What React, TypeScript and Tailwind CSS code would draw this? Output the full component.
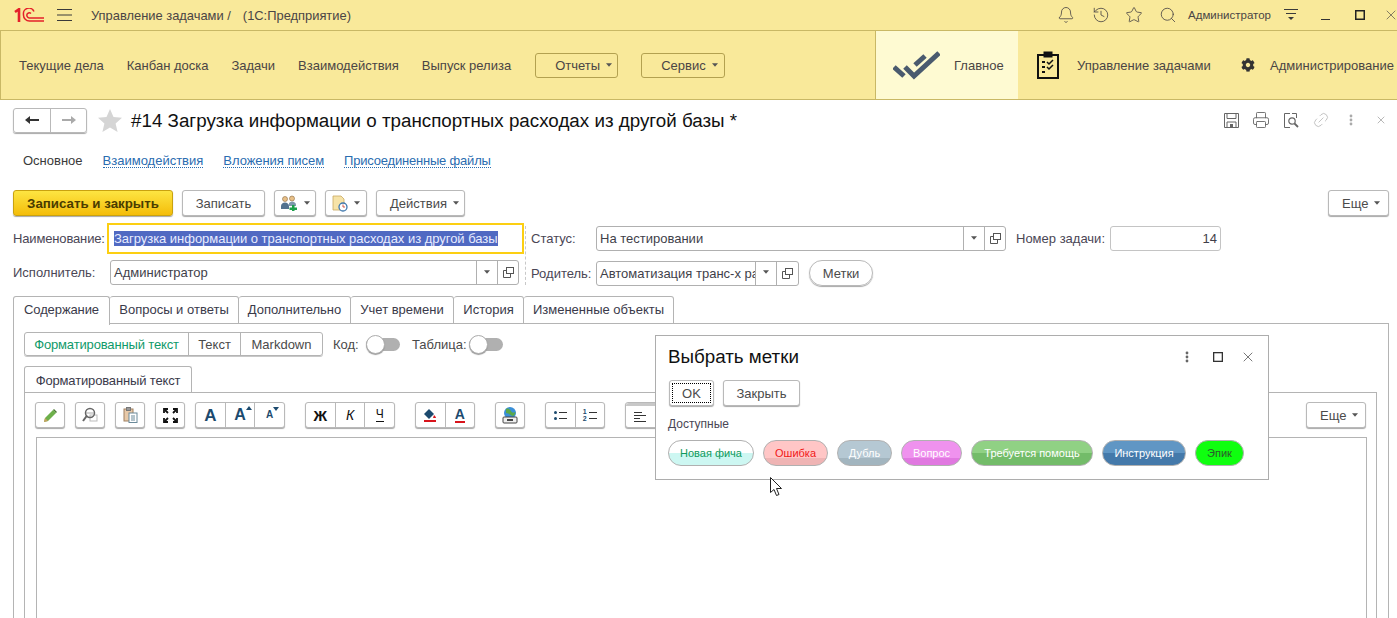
import type { ReactNode } from "react";
import { Bell, History, Star, Search, Printer, Link2, X } from "lucide-react";
import { FaCog } from "react-icons/fa";

function Caret({ className = "" }: { className?: string }) {
  return (
    <svg width="6" height="4" viewBox="0 0 7 4" className={`shrink-0 ${className}`}>
      <path d="M0 0h7L3.5 4z" fill="#555" />
    </svg>
  );
}

function Dots({ color = "#666" }: { color?: string }) {
  return (
    <svg width="4" height="12" viewBox="0 0 4 12">
      <circle cx="2" cy="2" r="1.4" fill={color} />
      <circle cx="2" cy="6" r="1.4" fill={color} />
      <circle cx="2" cy="10" r="1.4" fill={color} />
    </svg>
  );
}

function SquareIcon({ size = 10, stroke = "#333", weight = 1 }: { size?: number; stroke?: string; weight?: number }) {
  return (
    <svg width={size} height={size} viewBox={`0 0 ${size} ${size}`} fill="none" stroke={stroke} strokeWidth={weight}>
      <rect x={weight / 2} y={weight / 2} width={size - weight} height={size - weight} />
    </svg>
  );
}

function Logo1C() {
  return (
    <svg width="30" height="14" viewBox="0 0 30 14" fill="none" stroke="#e4202a" strokeWidth="1.5">
      <path d="M1 4 5 1.200V14" strokeWidth="2.6" />
      <path d="M20 3.500A5.500 5.500 0 0 0 9.500 6.500 6 6 0 0 0 16 13H30" />
      <path d="M17 5.500A2.500 2.500 0 0 0 12.800 7 3 3 0 0 0 16 10H30" />
    </svg>
  );
}

function OpenIcon() {
  return (
    <svg width="11" height="11" viewBox="0 0 11 11" fill="none" stroke="#555">
      <rect x="3.5" y="0.5" width="7" height="6" />
      <path d="M3.5 3.5H.5v7h7V6.5" />
    </svg>
  );
}

function Btn({ children, className = "" }: { children: ReactNode; className?: string }) {
  return (
    <div className={`flex h-[26px] items-center gap-[6px] rounded-[3px] border border-[#b9b9b9] bg-white text-[#4b4b4b] shadow-[0_1px_1px_#a8a8a8] ${className}`}>
      {children}
    </div>
  );
}

function Field({ text, width, textWidth }: { text: string; width: string; textWidth?: string }) {
  return (
    <div className={`flex h-[25px] items-center rounded-[3px] border border-[#b0b0b0] bg-white ${width}`}>
      <span className={`flex-1 overflow-hidden whitespace-nowrap pl-[3px] text-[#3f3f4a] ${textWidth ?? ""}`}>{text}</span>
      <span className="flex h-full w-[21px] items-center justify-center border-l border-[#b0b0b0] pb-[2px]">
        <Caret />
      </span>
      <span className="flex h-full w-[21px] items-center justify-center border-l border-[#b0b0b0]">
        <OpenIcon />
      </span>
    </div>
  );
}

function Tool({ children }: { children?: ReactNode }) {
  return <div className="flex h-full flex-1 items-center justify-center border-l border-[#b9b9b9] first:border-l-0">{children}</div>;
}

function ToolGroup({ children, width = "w-[30px]" }: { children: ReactNode; width?: string }) {
  return <div className={`flex h-[26px] shrink-0 rounded-[3px] border border-[#b9b9b9] bg-white shadow-[0_1px_1px_#a8a8a8] ${width}`}>{children}</div>;
}

function BigA({ size, mark }: { size: number; mark?: "up" | "down" }) {
  return (
    <span className="relative font-bold leading-none text-[#1c4a6e]" style={{ fontSize: size }}>
      A
      {mark === "up" && <span className="absolute -right-[6px] -top-[1px] h-0 w-0 border-x-[3px] border-b-[4px] border-x-transparent border-b-[#1c4a6e]" />}
      {mark === "down" && <span className="absolute -right-[6px] -top-[3px] h-0 w-0 border-x-[3px] border-t-[4px] border-x-transparent border-t-[#1c4a6e]" />}
    </span>
  );
}

function Toggle() {
  return (
    <div className="flex h-[13px] w-[34px] shrink-0 items-center rounded-full bg-[#b0b0b0]">
      <div className="h-[19px] w-[19px] shrink-0 rounded-full border border-[#adadad] bg-white shadow-[0_1px_1px_#999]" />
    </div>
  );
}

const tabs = [
  { name: "Вопросы и ответы", w: "w-[129px]" },
  { name: "Дополнительно", w: "w-[112px]" },
  { name: "Учет времени", w: "w-[103px]" },
  { name: "История", w: "w-[70px]" },
  { name: "Измененные объекты", w: "w-[150px]" },
];

const labels = [
  { name: "Новая фича", cls: "w-[86px] bg-[linear-gradient(#fff_50%,#cdf7f2_50%)] text-[#0f9a5c]" },
  { name: "Ошибка", cls: "w-[65px] bg-[linear-gradient(#ffc6c6_70%,#efb4b4_70%)] text-[#f01818]" },
  { name: "Дубль", cls: "w-[55px] bg-[linear-gradient(#b5c8d3_70%,#a2b5bf_70%)] text-white" },
  { name: "Вопрос", cls: "w-[61px] bg-[linear-gradient(#ef92ee_70%,#e078e0_70%)] text-white" },
  { name: "Требуется помощь", cls: "w-[122px] bg-[linear-gradient(#90d184_50%,#73bc69_50%)] text-white" },
  { name: "Инструкция", cls: "w-[84px] bg-[linear-gradient(#6096c4_50%,#4479aa_50%)] text-white" },
  { name: "Эпик", cls: "w-[49px] bg-[#0fff0f] text-[#2c5a2c]" },
];

export default function App() {
  return (
    <div className="relative h-[618px] w-[1397px] overflow-hidden bg-white text-[13px] leading-[15px] text-[#4a4a4a] [font-family:'Liberation_Sans',Arial,sans-serif]">
      {/* top bar */}
      <header className="flex h-[31px] items-center border-b border-[#c9b865] bg-[#f9e99a] pl-[14px] text-[#4a4545]">
        <Logo1C />
        <svg width="15" height="12" viewBox="0 0 15 12" className="ml-[13px]" stroke="#3a3a3a">
          <path d="M0 .5h15M0 6h15M0 11.5h15" />
        </svg>
        <span className="ml-[19px] text-[12.9px]">Управление задачами /</span>
        <span className="ml-[12px] text-[12.9px]">(1С:Предприятие)</span>
        <div className="ml-auto flex items-center">
          <Bell size={18} strokeWidth={1.1} className="mr-[17px]" />
          <History size={18} strokeWidth={1.1} className="mr-[15px]" />
          <Star size={18} strokeWidth={1.1} className="mr-[16px]" />
          <Search size={18} strokeWidth={1.1} className="mr-[11px]" />
          <span className="mr-[13px] text-[11.5px]">Администратор</span>
          <svg width="14" height="12" viewBox="0 0 14 12" stroke="#3a3a3a" className="mr-[23px]">
            <path d="M0 .5h14M2 4.500h10" />
            <path d="M4 8h6l-3 3z" fill="#3a3a3a" stroke="none" />
          </svg>
          <span className="mr-[25px] mt-[8px] h-px w-[9px] bg-[#333]" />
          <span className="mr-[18px]"><SquareIcon size={10} stroke="#222" weight={1.5} /></span>
          <X size={16} strokeWidth={1} className="-mr-[2px]" />
        </div>
      </header>

      {/* sections */}
      <nav className="flex h-[69px] items-center whitespace-nowrap border-b border-l border-[#c9b865] bg-[#f9e99a] text-[#4a4545]">
        <div className="flex w-[874px] shrink-0 items-center gap-[23px] pl-[18px]">
          <span>Текущие дела</span>
          <span>Канбан доска</span>
          <span>Задачи</span>
          <span>Взаимодействия</span>
          <span>Выпуск релиза</span>
          <div className="ml-[1px] flex h-[25px] w-[83px] items-center gap-[6px] rounded-[3px] border border-[#b3a150] pl-[19px]">
            Отчеты <Caret />
          </div>
          <div className="flex h-[25px] w-[84px] items-center gap-[6px] rounded-[3px] border border-[#b3a150] pl-[19px]">
            Сервис <Caret />
          </div>
        </div>
        <div className="flex h-full w-[143px] shrink-0 items-center border-l border-[#c9b865] bg-[#fefad2] pl-[17px]">
          <svg width="47" height="30" viewBox="0 0 47 30" fill="none" stroke="#4a5a6e" strokeWidth="5">
            <path d="M1 17 11 26" />
            <path d="M12 17 21 26 46 3" />
            <path d="M22 15 32 6" />
          </svg>
          <span className="ml-[14px]">Главное</span>
        </div>
        <div className="flex h-full w-[223px] shrink-0 items-center pl-[19px]">
          <svg width="22" height="28" viewBox="0 0 22 28" fill="none" stroke="#111">
            <rect x="1" y="4" width="20" height="23" strokeWidth="2" fill="#f9e99a" />
            <rect x="7" y="1" width="8" height="5" fill="#111" />
            <path d="M5 11h3M5 16h3M5 21h3" strokeWidth="2" />
            <path d="M10 11l2 2 4-4M10 16l2 2 4-4" strokeWidth="1.5" />
          </svg>
          <span className="ml-[18px]">Управление задачами</span>
        </div>
        <div className="flex h-full flex-1 items-center">
          <FaCog size={14} className="text-[#333]" />
          <span className="ml-[15px]">Администрирование</span>
        </div>
      </nav>

      <main className="flex flex-col pl-[13px] pr-[8px]">
        {/* title */}
        <div className="flex h-[39px] items-center pt-[1px]">
          <div className="flex h-[25px] w-[74px] rounded-[3px] border border-[#b9b9b9] shadow-[0_1px_1px_#a8a8a8]">
            <div className="flex w-[37px] items-center justify-center border-r border-[#b9b9b9]">
              <svg width="14" height="10" viewBox="0 0 14 10"><path d="M0 5l5-4v3h9v2H5v3z" fill="#333" /></svg>
            </div>
            <div className="flex flex-1 items-center justify-center">
              <svg width="14" height="10" viewBox="0 0 14 10"><path d="M14 5L9 1v3H0v2h9v3z" fill="#aaa" /></svg>
            </div>
          </div>
          <svg width="24" height="23" viewBox="0 0 24 23" className="ml-[11px]">
            <path d="M12 0l3.500 8 8.500.8-6.400 5.600 2 8.600L12 18.400 4.400 23l2-8.600L0 8.800 8.500 8z" fill="#d5d5d5" />
          </svg>
          <span className="ml-[9px] whitespace-nowrap text-[18.8px] font-medium text-[#111]">#14 Загрузка информации о транспортных расходах из другой базы *</span>
          <div className="ml-auto -mr-[7px] flex items-center text-[#666]">
            <span className="flex w-[30px] justify-center">
              <svg width="15" height="15" viewBox="0 0 15 15" fill="none" stroke="#666">
                <path d="M.5.5h14v14H.5z" />
                <path d="M3 .5v5h9v-5M3 14.500V9h9v5.500" />
                <rect x="6" y="11" width="3" height="3.500" fill="#666" stroke="none" />
              </svg>
            </span>
            <span className="flex w-[30px] justify-center"><Printer size={18} strokeWidth={1.2} /></span>
            <span className="flex w-[30px] justify-center">
              <svg width="15" height="15" viewBox="0 0 15 15" fill="none" stroke="#666">
                <path d="M6 .5H.5v14H6M8 .5h4.500V5" />
                <circle cx="8" cy="8" r="3.200" strokeWidth="1.200" />
                <path d="M10.500 10.500 14 14" strokeWidth="1.800" />
              </svg>
            </span>
            <span className="flex w-[30px] justify-center"><Link2 size={18} strokeWidth={1.1} className="-rotate-45 text-[#bbb]" /></span>
            <span className="flex w-[30px] justify-center"><Dots color="#aaa" /></span>
            <span className="flex w-[30px] justify-center"><X size={12} strokeWidth={1.2} className="text-[#888]" /></span>
          </div>
        </div>

        {/* form pages */}
        <div className="mt-[14px] flex h-[15px] items-center gap-[20px] pl-[10px]">
          <span className="text-[#3a3a3a]">Основное</span>
          <span className="border-b border-dotted border-[#2a6cb0] leading-[13px] text-[#2a6cb0]">Взаимодействия</span>
          <span className="border-b border-dotted border-[#2a6cb0] leading-[13px] tracking-[-0.05px] text-[#2a6cb0]">Вложения писем</span>
          <span className="border-b border-dotted border-[#2a6cb0] leading-[13px] tracking-[-0.2px] text-[#2a6cb0]">Присоединенные файлы</span>
        </div>

        {/* command bar */}
        <div className="mt-[22px] flex items-center">
          <div className="flex h-[26px] w-[160px] items-center justify-center rounded-[3px] border border-[#c9a20f] bg-[linear-gradient(#fde542,#f4bd0a)] text-[13.3px] font-bold text-[#4a3c00] shadow-[0_1px_1px_#a8a8a8]">
            Записать и закрыть
          </div>
          <Btn className="ml-[9px] w-[83px] justify-center">Записать</Btn>
          <Btn className="ml-[9px] w-[42px] justify-center">
            <svg width="18" height="16" viewBox="0 0 18 16">
              <circle cx="5" cy="4" r="2.500" fill="#e8c088" stroke="#8a6a40" strokeWidth=".6" />
              <circle cx="12" cy="3.500" r="2.500" fill="#e8c088" stroke="#8a6a40" strokeWidth=".6" />
              <path d="M1 14v-3c0-2 2-3.500 4-3.500S9 9 9 11v3z" fill="#52728f" />
              <path d="M9 8c1-1 2-1.500 3-1.500 2 0 4 1.500 4 3V11H9z" fill="#7d97ab" />
              <path d="M12 10h2.500v2.500H17V15h-2.500v1H12v-1H9.500v-2.500H12z" fill="#1ca04a" />
            </svg>
            <Caret />
          </Btn>
          <Btn className="ml-[9px] w-[42px] justify-center">
            <svg width="16" height="17" viewBox="0 0 16 17">
              <path d="M1 1h8l3 3v6H8v5H1z" fill="#f6e3a8" stroke="#c9a860" strokeWidth=".8" />
              <circle cx="11" cy="12" r="4" fill="#fff" stroke="#3f78ad" strokeWidth="1.300" />
              <path d="M11 9.500V12h2" stroke="#c43" fill="none" strokeWidth=".9" />
            </svg>
            <Caret />
          </Btn>
          <Btn className="ml-[9px] w-[89px] pl-[13px]">Действия <Caret /></Btn>
          <Btn className="ml-auto w-[61px] pl-[13px]">Еще <Caret /></Btn>
        </div>

        {/* fields */}
        <div className="mt-[7px] flex">
          <div className="flex w-[512px] shrink-0 flex-col">
            <div className="flex h-[31px] items-center">
              <span className="w-[94px] shrink-0 tracking-[-0.15px] text-[#4a4655]">Наименование:</span>
              <div className="flex h-[31px] w-[417px] items-center whitespace-nowrap border-2 border-[#fccf12] pl-[5px]">
                <span className="bg-[#5069c2] tracking-[-0.035px] text-[#e8ecff]">Загрузка информации о транспортных расходах из другой базы</span>
              </div>
            </div>
            <div className="mt-[6px] flex items-center">
              <span className="w-[97px] shrink-0 text-[#4a4655]">Исполнитель:</span>
              <Field text="Администратор" width="w-[409px]" />
            </div>
          </div>
          <div className="mt-[3px] h-[59px] border-l border-dashed border-[#c8c8c8]" />
          <div className="ml-[5px] flex flex-col">
            <div className="mt-[3px] flex items-center">
              <span className="w-[65px] shrink-0 text-[#4a4655]">Статус:</span>
              <Field text="На тестировании" width="w-[410px]" />
              <span className="ml-[10px] w-[94px] text-[#4a4655]">Номер задачи:</span>
              <div className="flex h-[25px] w-[111px] items-center justify-end rounded-[3px] border border-[#c4c4c4] pr-[3px] text-[#3f3f4a]">14</div>
            </div>
            <div className="mt-[9px] flex items-center">
              <span className="w-[65px] shrink-0 text-[#4a4655]">Родитель:</span>
              <Field text="Автоматизация транс-х работ" width="w-[203px]" textWidth="w-[158px] flex-none" />
              <div className="ml-[10px] flex h-[26px] w-[64px] items-center justify-center rounded-full border border-[#b9b9b9] shadow-[0_1px_1px_#a8a8a8]">Метки</div>
            </div>
          </div>
        </div>

        {/* tabs */}
        <div className="mt-[10px] flex h-[28px]">
          <div className="z-10 flex h-[29px] w-[97px] items-center justify-center rounded-t-[3px] border border-b-0 border-[#b4b4b4] bg-white pb-[3px] tracking-[-0.1px] text-[#3a3a4a]">Содержание</div>
          {tabs.map((t) => (
            <div key={t.name} className={`flex h-[28px] items-center justify-center rounded-t-[3px] border border-l-0 border-[#b4b4b4] pb-[2px] text-[#3a3a4a] ${t.w}`}>
              {t.name}
            </div>
          ))}
        </div>
        <section className="-mt-px flex h-[400px] w-[1376px] flex-col border border-[#b4b4b4] px-[10px]">
          <div className="mt-[8px] flex items-center">
            <div className="flex h-[24px] w-[299px] rounded-[3px] border border-[#b4b4b4] shadow-[0_1px_0_#c8c8c8]">
              <span className="flex w-[164px] items-center justify-center border-r border-[#b4b4b4] tracking-[-0.15px] text-[#0f9a6a]">Форматированный текст</span>
              <span className="flex w-[52px] items-center justify-center border-r border-[#b4b4b4]">Текст</span>
              <span className="flex flex-1 items-center justify-center">Markdown</span>
            </div>
            <span className="ml-[10px] w-[33px]">Код:</span>
            <Toggle />
            <span className="ml-[12px] w-[57px]">Таблица:</span>
            <Toggle />
          </div>

          <div className="mt-[10px] flex h-[27px] w-[168px] items-center justify-center rounded-t-[3px] border border-b-0 border-[#b4b4b4] tracking-[-0.15px] text-[#3a3a4a]">Форматированный текст</div>
          <div className="-mt-px h-[300px] w-[1353px] border border-[#b4b4b4] pl-[10px] pr-[10px]">
            <div className="mt-[9px] flex h-[26px] items-center">
              <ToolGroup>
                <Tool>
                  <svg width="15" height="15" viewBox="0 0 15 15">
                    <path d="M1 14l1-4 8-8 3 3-8 8z" fill="#6db04a" />
                    <path d="M1 14l1-4 3 3z" fill="#c9a060" />
                    <path d="M10 2l1-1 3 3-1 1z" fill="#4a7a33" />
                  </svg>
                </Tool>
              </ToolGroup>
              <span className="w-[10px] shrink-0" />
              <ToolGroup>
                <Tool>
                  <svg width="16" height="16" viewBox="0 0 16 16" fill="none" stroke="#666">
                    <rect x="8" y="8" width="7" height="6" stroke="#bbb" />
                    <circle cx="8" cy="6" r="4.500" strokeWidth="1.500" />
                    <path d="M5 8.500 1 14" strokeWidth="2" />
                    <path d="M4 6h8" stroke="#aaa" />
                  </svg>
                </Tool>
              </ToolGroup>
              <span className="w-[10px] shrink-0" />
              <ToolGroup>
                <Tool>
                  <svg width="15" height="16" viewBox="0 0 15 16" fill="none" stroke="#a08060">
                    <rect x="1" y="2" width="9" height="12" fill="#e8c9a8" />
                    <rect x="3.500" y="0.500" width="4" height="3" fill="#999" stroke="#777" />
                    <rect x="6" y="6" width="8" height="9.500" fill="#fff" stroke="#6b8a9a" />
                    <path d="M8 9h4M8 11h4M8 13h4" stroke="#6b8a9a" />
                  </svg>
                </Tool>
              </ToolGroup>
              <span className="w-[10px] shrink-0" />
              <ToolGroup>
                <Tool>
                  <svg width="15" height="15" viewBox="0 0 15 15" fill="none" stroke="#111" strokeWidth="1.800">
                    <path d="M1 5V1h4M10 1h4v4M14 10v4h-4M5 14H1v-4" />
                    <path d="M2 2l3 3M13 2l-3 3M13 13l-3-3M2 13l3-3" />
                  </svg>
                </Tool>
              </ToolGroup>
              <span className="w-[10px] shrink-0" />
              <ToolGroup width="w-[90px]">
                <Tool><BigA size={17} /></Tool>
                <Tool><BigA size={16} mark="up" /></Tool>
                <Tool><BigA size={10} mark="down" /></Tool>
              </ToolGroup>
              <span className="w-[20px] shrink-0" />
              <ToolGroup width="w-[90px]">
                <Tool><span className="text-[15px] font-bold text-[#111]">Ж</span></Tool>
                <Tool><span className="text-[14px] italic text-[#111]">К</span></Tool>
                <Tool><span className="border-b border-[#111] text-[12px] leading-[13px] text-[#111]">Ч</span></Tool>
              </ToolGroup>
              <span className="w-[20px] shrink-0" />
              <ToolGroup width="w-[60px]">
                <Tool>
                  <span className="flex flex-col items-center gap-[1px] border-b-2 border-[#d8141c]">
                    <svg width="12" height="11" viewBox="0 0 12 11">
                      <path d="M5 0l5 5-5 5-5-5z" fill="#1c4a6e" />
                      <path d="M10 6c1 1 2 2 2 3H9z" fill="#d8141c" />
                    </svg>
                  </span>
                </Tool>
                <Tool><span className="border-b-2 border-[#d8141c] text-[14px] font-bold leading-[13px] text-[#1c4a6e]">A</span></Tool>
              </ToolGroup>
              <span className="w-[20px] shrink-0" />
              <ToolGroup>
                <Tool>
                  <svg width="16" height="17" viewBox="0 0 16 17">
                    <circle cx="8" cy="6" r="6" fill="#3a8fd8" />
                    <path d="M4 2c2-1 4 0 5 2s3 2 4 1 0 4-2 4-4-3-7-3z" fill="#5aa84a" />
                    <rect x="1" y="10" width="14" height="6" rx="1" fill="#eee" stroke="#444" />
                    <path d="M5 13h6" stroke="#444" strokeWidth="2" />
                  </svg>
                </Tool>
              </ToolGroup>
              <span className="w-[20px] shrink-0" />
              <ToolGroup width="w-[60px]">
                <Tool>
                  <svg width="13" height="9" viewBox="0 0 13 9">
                    <circle cx="1.500" cy="1.500" r="1.500" fill="#1c4a6e" />
                    <circle cx="1.500" cy="7.500" r="1.500" fill="#1c4a6e" />
                    <path d="M5 1.500h8M5 7.500h8" stroke="#333" />
                  </svg>
                </Tool>
                <Tool>
                  <span className="flex items-center gap-[2px]">
                    <span className="text-[7px] font-bold leading-[7px] text-[#1c4a6e]">1<br />2</span>
                    <svg width="8" height="9" viewBox="0 0 8 9"><path d="M0 1.500h8M0 7.500h8" stroke="#333" /></svg>
                  </span>
                </Tool>
              </ToolGroup>
              <span className="w-[20px] shrink-0" />
              <ToolGroup width="w-[60px]">
                <div className="flex h-full flex-1 items-center justify-center rounded-l-[3px] border-t-[3px] border-[#c8c8c8]">
                  <svg width="13" height="10" viewBox="0 0 13 10" stroke="#333"><path d="M0 .5h8M0 3.500h12M0 6.500h6M0 9.500h12" /></svg>
                </div>
                <Tool />
              </ToolGroup>
              <Btn className="ml-auto w-[60px] shrink-0 pl-[13px]">Еще <Caret /></Btn>
            </div>
            <div className="ml-[1px] mt-[9px] h-[200px] w-[1331px] border border-[#b4b4b4]" />
          </div>
        </section>
      </main>

      {/* dialog over the form */}
      <div className="absolute left-[655px] top-[335px] z-20 flex h-[145px] w-[614px] flex-col border border-[#adadad] bg-white px-[12px]">
        <div className="flex h-[43px] items-center pb-[2px]">
          <span className="text-[18.8px] text-[#111]">Выбрать метки</span>
          <div className="ml-auto flex items-center">
            <span className="mr-[24px] flex"><Dots /></span>
            <span className="mr-[17px]"><SquareIcon size={10} stroke="#333" weight={1.3} /></span>
            <X size={16} strokeWidth={1} className="text-[#333]" />
          </div>
        </div>
        <div className="mt-[1px] flex items-center">
          <Btn className="ml-[1px] w-[45px] justify-center p-[2px]">
            <span className="flex h-full w-full items-center justify-center border border-dotted border-black">OK</span>
          </Btn>
          <Btn className="ml-[9px] w-[77px] justify-center">Закрыть</Btn>
        </div>
        <span className="mt-[11px] text-[12px] text-[#4a4655]">Доступные</span>
        <div className="mt-[8px] flex gap-[9px]">
          {labels.map((l) => (
            <div key={l.name} className={`flex h-[26px] shrink-0 items-center justify-center rounded-full border border-[#b0b0b0] text-[11px] ${l.cls}`}>
              {l.name}
            </div>
          ))}
        </div>
      </div>

      {/* mouse pointer */}
      <svg width="13" height="20" viewBox="0 0 13 20" className="absolute left-[770px] top-[477px] z-30">
        <path d="M.5.5v15l3.500-3 2.500 6 2.500-1-2.500-6h5z" fill="#fff" stroke="#222" />
      </svg>
    </div>
  );
}
